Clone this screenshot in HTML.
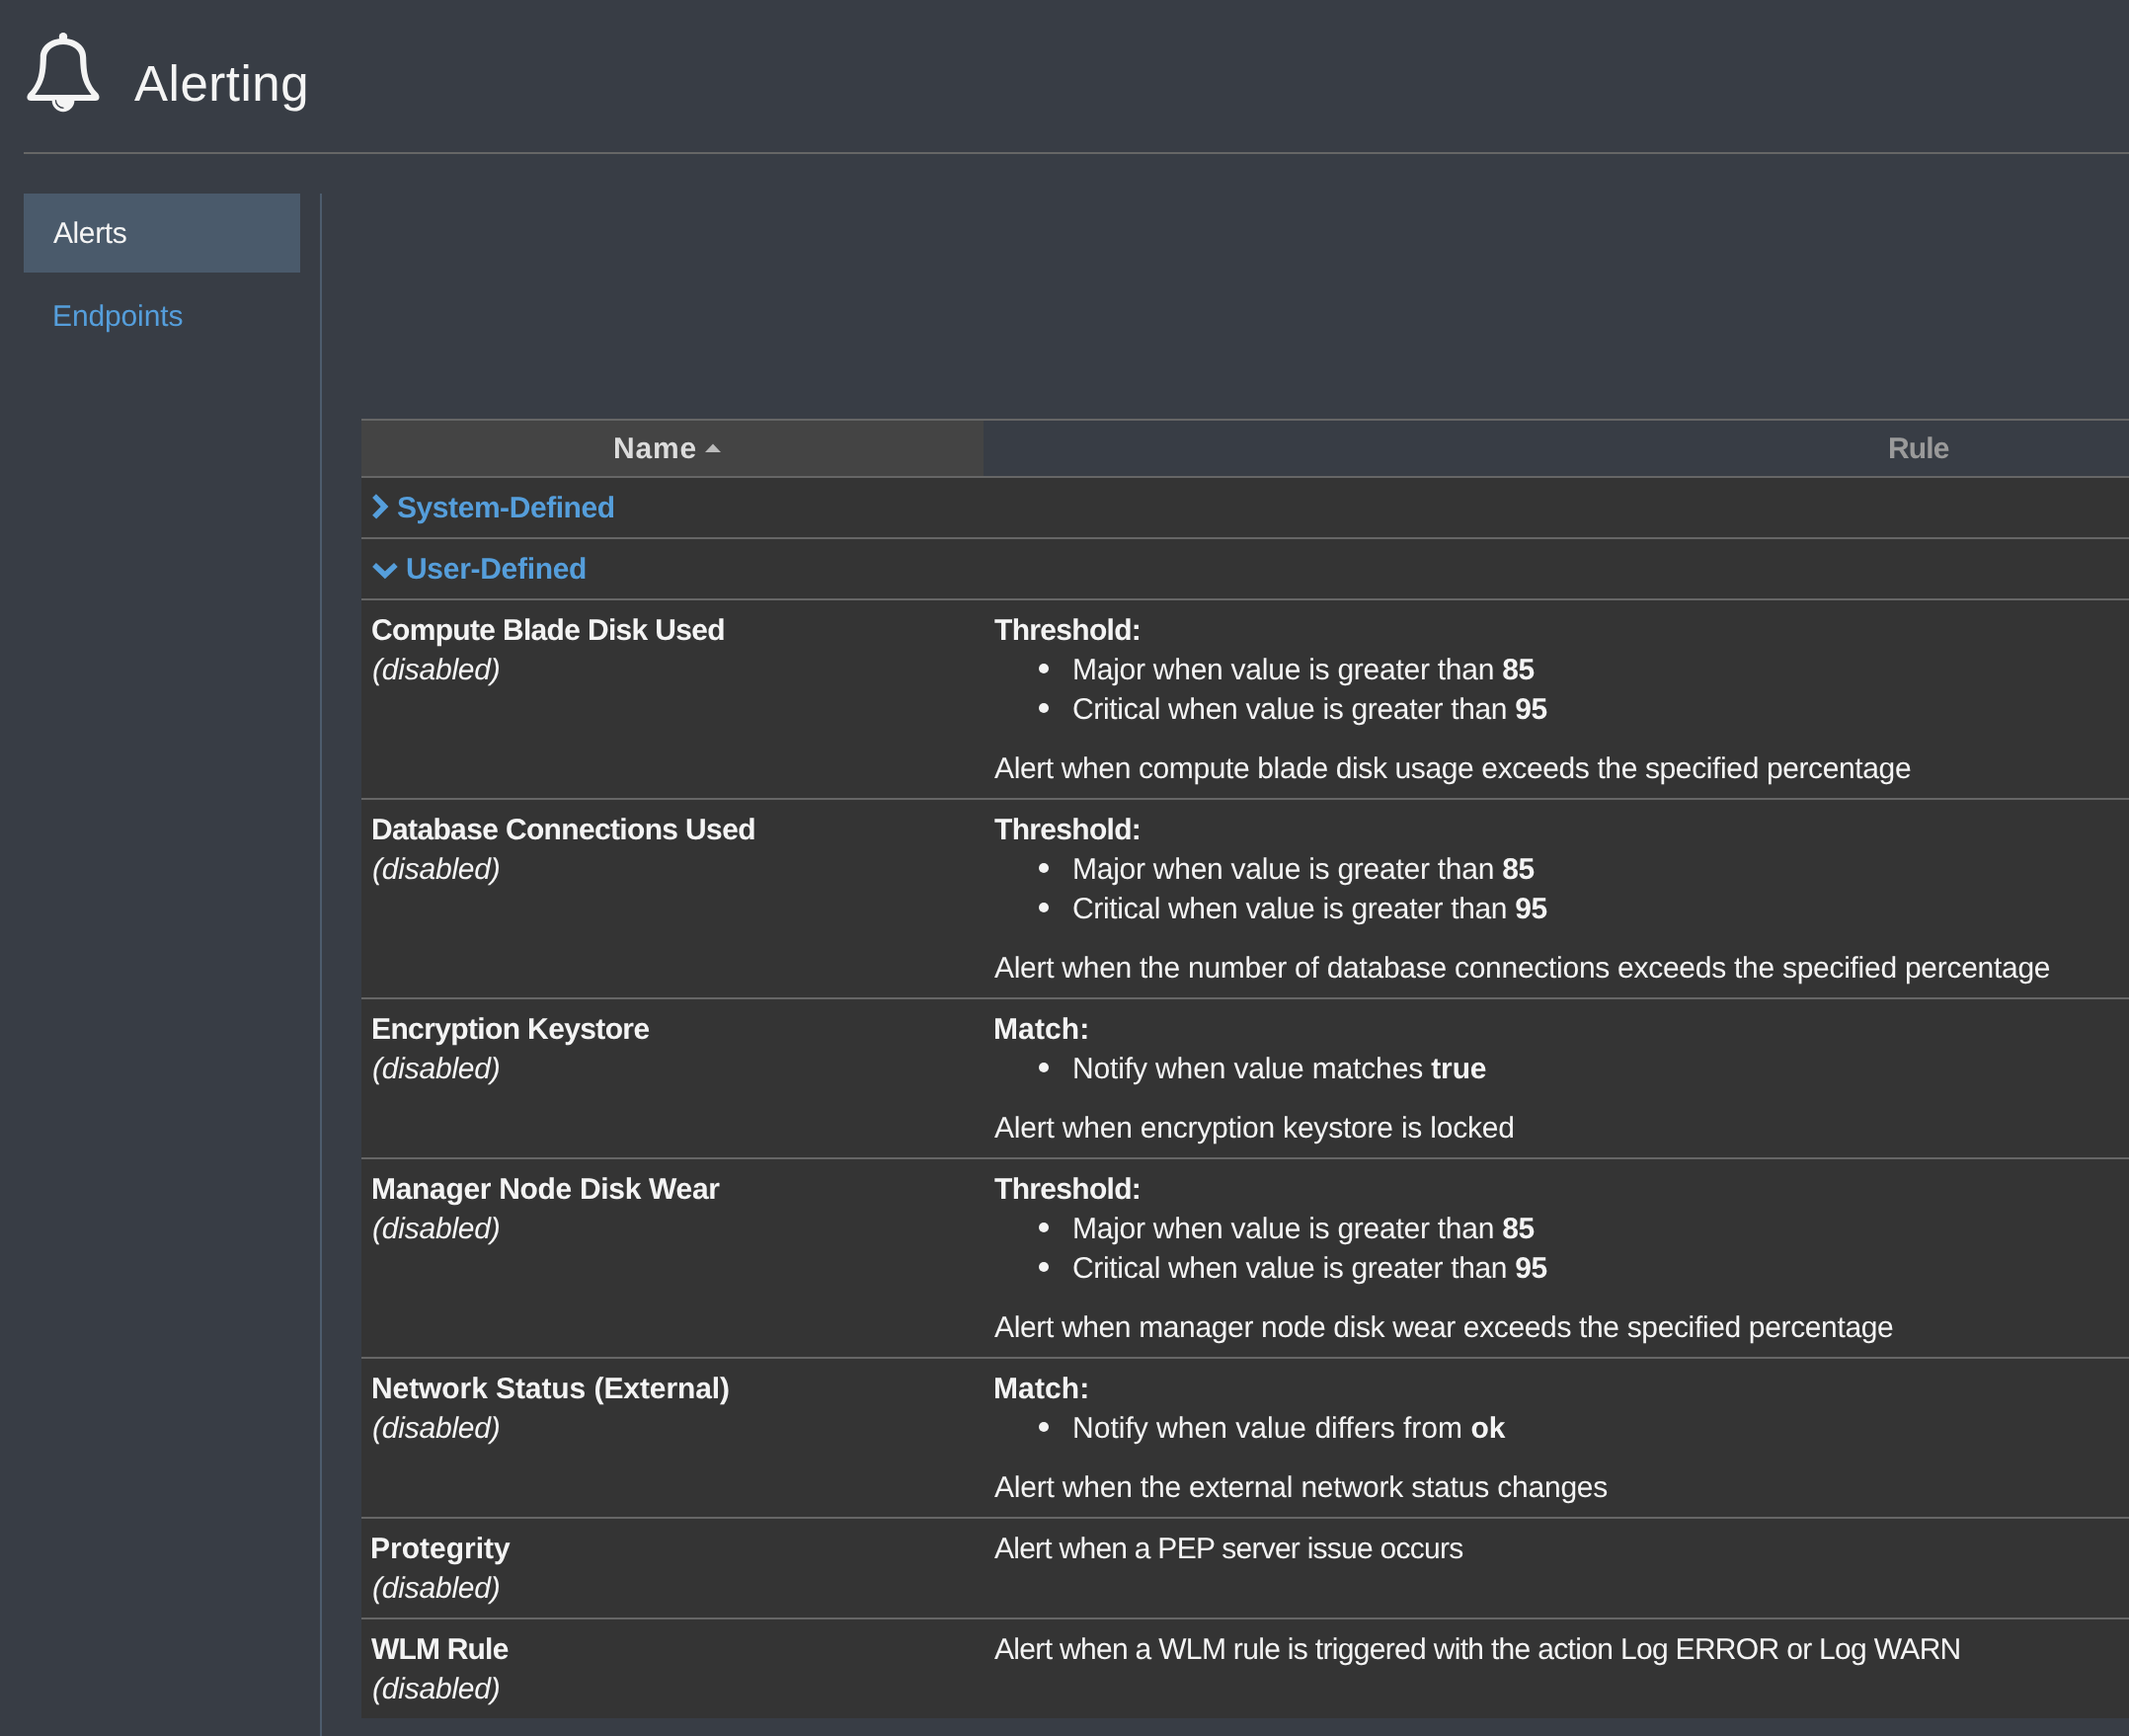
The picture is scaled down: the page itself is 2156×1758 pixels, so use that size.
<!DOCTYPE html>
<html><head><meta charset="utf-8">
<style>
html,body{margin:0;padding:0}
body{width:2156px;height:1758px;overflow:hidden;background:#383d45;position:relative;font-family:"Liberation Sans",sans-serif;text-rendering:geometricPrecision;color:#f4f4f4;font-size:30.0px}
.a{position:absolute}
.x{position:absolute;white-space:nowrap;line-height:40px;will-change:transform}
.b{font-weight:bold}
.lnk{color:#559edb}
.hn{color:#dcdcdc}
.hr2{color:#9a9a9a}
b{font-weight:bold}
i{font-style:italic}
.dot{position:absolute;width:10.2px;height:10.2px;border-radius:50%;background:#f4f4f4}
</style></head><body>
<svg class="a" style="left:0;top:0" width="130" height="130" viewBox="0 0 130 130">
<path fill="#f4f4f4" fill-rule="evenodd" d="M40.8 58 C40.8 46.5 51 39 64 39 C77 39 87.2 46.5 87.2 58 L87.4 64 C88 78 91 86 98 93.5 C101.8 97 101.5 102 96.5 102 L31.5 102 C26.5 102 26.2 97 30 93.5 C37 86 40 78 40.6 64 Z M47 58 C47 50.5 55 44.9 64 44.9 C73 44.9 81 50.5 81 58 L81.3 64 C82 78 85 86 92.6 96 L35.4 96 C43 86 46 78 46.7 64 Z"/>
<rect x="59.8" y="32.9" width="8.4" height="9" rx="4.2" fill="#f4f4f4"/>
<path fill="#f4f4f4" d="M52.6 101.6 L75.4 101.6 A11.4 11.6 0 0 1 52.6 101.6 Z"/>
<path fill="none" stroke="#383d45" stroke-width="1.3" d="M56.4 101.2 A8 8 0 0 0 64.5 109.3"/>
</svg>
<div class="a" style="left:24px;top:154px;width:2132px;height:2px;background:#666666"></div>
<div class="a" style="left:24px;top:196px;width:280px;height:80px;background:#4a5a6b"></div>
<div class="a" style="left:324px;top:196px;width:2px;height:1562px;background:#4d5c6d"></div>
<div class="a" style="left:366px;top:484px;width:1790px;height:1256px;background:#343434"></div>
<div class="a" style="left:366px;top:426px;width:630px;height:56px;background:#444444"></div>
<div class="a" style="left:366px;top:424px;width:1790px;height:2px;background:#666666"></div>
<div class="a" style="left:366px;top:482px;width:1790px;height:2px;background:#666666"></div>
<div class="a" style="left:366px;top:544px;width:1790px;height:2px;background:#666666"></div>
<div class="a" style="left:366px;top:606px;width:1790px;height:2px;background:#666666"></div>
<div class="a" style="left:366px;top:808px;width:1790px;height:2px;background:#666666"></div>
<div class="a" style="left:366px;top:1010px;width:1790px;height:2px;background:#666666"></div>
<div class="a" style="left:366px;top:1172px;width:1790px;height:2px;background:#666666"></div>
<div class="a" style="left:366px;top:1374px;width:1790px;height:2px;background:#666666"></div>
<div class="a" style="left:366px;top:1536px;width:1790px;height:2px;background:#666666"></div>
<div class="a" style="left:366px;top:1638px;width:1790px;height:2px;background:#666666"></div>
<svg class="a" style="left:700px;top:440px" width="40" height="30"><polygon points="14,18 22,9.6 30,18" fill="#bbbbbb"/></svg>
<svg class="a" style="left:370px;top:490px" width="40" height="110"><polygon points="7.1,14 10.9,10.2 23.4,22.9 11.1,35.6 7.1,31.8 15.6,22.9" fill="#559edb"/><polygon points="7.1,83.9 10.9,80.1 19.9,88.4 29,80.1 32.7,83.9 19.9,96.2" fill="#559edb"/></svg>
<div class="dot" style="left:1051.9px;top:671.9px"></div>
<div class="dot" style="left:1051.9px;top:711.9px"></div>
<div class="dot" style="left:1051.9px;top:873.9px"></div>
<div class="dot" style="left:1051.9px;top:913.9px"></div>
<div class="dot" style="left:1051.9px;top:1075.9px"></div>
<div class="dot" style="left:1051.9px;top:1237.9px"></div>
<div class="dot" style="left:1051.9px;top:1277.9px"></div>
<div class="dot" style="left:1051.9px;top:1439.9px"></div>
<div class="x t" id="title" style="left:136.00px;top:59.0px;letter-spacing:0.523px;font-size:51px;line-height:51px;">Alerting</div>
<div class="x w" id="alerts" style="left:54.00px;top:216.5px;letter-spacing:-0.400px;">Alerts</div>
<div class="x lnk" id="endpoints" style="left:53.00px;top:300.5px;letter-spacing:-0.125px;">Endpoints</div>
<div class="x b hn" id="name_hdr" style="left:620.51px;top:434.5px;letter-spacing:0.830px;">Name</div>
<div class="x b hr2" id="rule_hdr" style="left:1912.49px;top:434.5px;letter-spacing:-0.893px;">Rule</div>
<div class="x b lnk" id="sysdef" style="left:402.49px;top:494.5px;letter-spacing:-0.435px;">System-Defined</div>
<div class="x b lnk" id="userdef" style="left:410.62px;top:556.5px;letter-spacing:-0.300px;">User-Defined</div>
<div class="x w" id="n1" style="left:375.66px;top:618.5px;letter-spacing:-0.674px;"><b>Compute Blade Disk Used</b></div>
<div class="x w" id="disabled_n1" style="left:376.68px;top:658.5px;letter-spacing:-0.220px;"><i>(disabled)</i></div>
<div class="x w" id="threshold_n1" style="left:1006.51px;top:618.5px;letter-spacing:-0.683px;"><b>Threshold:</b></div>
<div class="x w" id="major_n1" style="left:1086.00px;top:658.5px;letter-spacing:-0.254px;">Major when value is greater than <b>85</b></div>
<div class="x w" id="critical_n1" style="left:1086.34px;top:698.5px;letter-spacing:-0.334px;">Critical when value is greater than <b>95</b></div>
<div class="x w" id="desc1_n1" style="left:1006.51px;top:758.5px;letter-spacing:-0.378px;">Alert when compute blade disk usage exceeds the specified percentage</div>
<div class="x w" id="n2" style="left:375.98px;top:820.5px;letter-spacing:-0.650px;"><b>Database Connections Used</b></div>
<div class="x w" id="disabled_n2" style="left:376.68px;top:860.5px;letter-spacing:-0.220px;"><i>(disabled)</i></div>
<div class="x w" id="threshold_n2" style="left:1006.51px;top:820.5px;letter-spacing:-0.683px;"><b>Threshold:</b></div>
<div class="x w" id="major_n2" style="left:1086.00px;top:860.5px;letter-spacing:-0.254px;">Major when value is greater than <b>85</b></div>
<div class="x w" id="critical_n2" style="left:1086.34px;top:900.5px;letter-spacing:-0.334px;">Critical when value is greater than <b>95</b></div>
<div class="x w" id="desc2_n2" style="left:1006.51px;top:960.5px;letter-spacing:-0.275px;">Alert when the number of database connections exceeds the specified percentage</div>
<div class="x w" id="n3" style="left:375.98px;top:1022.5px;letter-spacing:-0.628px;"><b>Encryption Keystore</b></div>
<div class="x w" id="disabled_n3" style="left:376.68px;top:1062.5px;letter-spacing:-0.220px;"><i>(disabled)</i></div>
<div class="x w" id="match_n3" style="left:1005.96px;top:1022.5px;letter-spacing:0.102px;"><b>Match:</b></div>
<div class="x w" id="true_n3" style="left:1086.00px;top:1062.5px;letter-spacing:-0.138px;">Notify when value matches <b>true</b></div>
<div class="x w" id="desc3_n3" style="left:1006.51px;top:1122.5px;letter-spacing:-0.214px;">Alert when encryption keystore is locked</div>
<div class="x w" id="n4" style="left:375.98px;top:1184.5px;letter-spacing:-0.315px;"><b>Manager Node Disk Wear</b></div>
<div class="x w" id="disabled_n4" style="left:376.68px;top:1224.5px;letter-spacing:-0.220px;"><i>(disabled)</i></div>
<div class="x w" id="threshold_n4" style="left:1006.51px;top:1184.5px;letter-spacing:-0.683px;"><b>Threshold:</b></div>
<div class="x w" id="major_n4" style="left:1086.00px;top:1224.5px;letter-spacing:-0.254px;">Major when value is greater than <b>85</b></div>
<div class="x w" id="critical_n4" style="left:1086.34px;top:1264.5px;letter-spacing:-0.334px;">Critical when value is greater than <b>95</b></div>
<div class="x w" id="desc4_n4" style="left:1006.51px;top:1324.5px;letter-spacing:-0.356px;">Alert when manager node disk wear exceeds the specified percentage</div>
<div class="x w" id="n5" style="left:375.98px;top:1386.5px;letter-spacing:-0.083px;"><b>Network Status (External)</b></div>
<div class="x w" id="disabled_n5" style="left:376.68px;top:1426.5px;letter-spacing:-0.220px;"><i>(disabled)</i></div>
<div class="x w" id="match_n5" style="left:1005.96px;top:1386.5px;letter-spacing:0.102px;"><b>Match:</b></div>
<div class="x w" id="ok_n5" style="left:1086.00px;top:1426.5px;letter-spacing:0.015px;">Notify when value differs from <b>ok</b></div>
<div class="x w" id="desc5_n5" style="left:1006.51px;top:1486.5px;letter-spacing:-0.200px;">Alert when the external network status changes</div>
<div class="x w" id="n6" style="left:375.30px;top:1548.5px;letter-spacing:0.004px;"><b>Protegrity</b></div>
<div class="x w" id="disabled_n6" style="left:376.68px;top:1588.5px;letter-spacing:-0.220px;"><i>(disabled)</i></div>
<div class="x w" id="desc6_n6" style="left:1006.51px;top:1548.5px;letter-spacing:-0.748px;">Alert when a PEP server issue occurs</div>
<div class="x w" id="n7" style="left:376.00px;top:1650.5px;letter-spacing:-0.809px;"><b>WLM Rule</b></div>
<div class="x w" id="disabled_n7" style="left:376.68px;top:1690.5px;letter-spacing:-0.220px;"><i>(disabled)</i></div>
<div class="x w" id="desc7_n7" style="left:1006.51px;top:1650.5px;letter-spacing:-0.681px;">Alert when a WLM rule is triggered with the action Log ERROR or Log WARN</div>
</body></html>
